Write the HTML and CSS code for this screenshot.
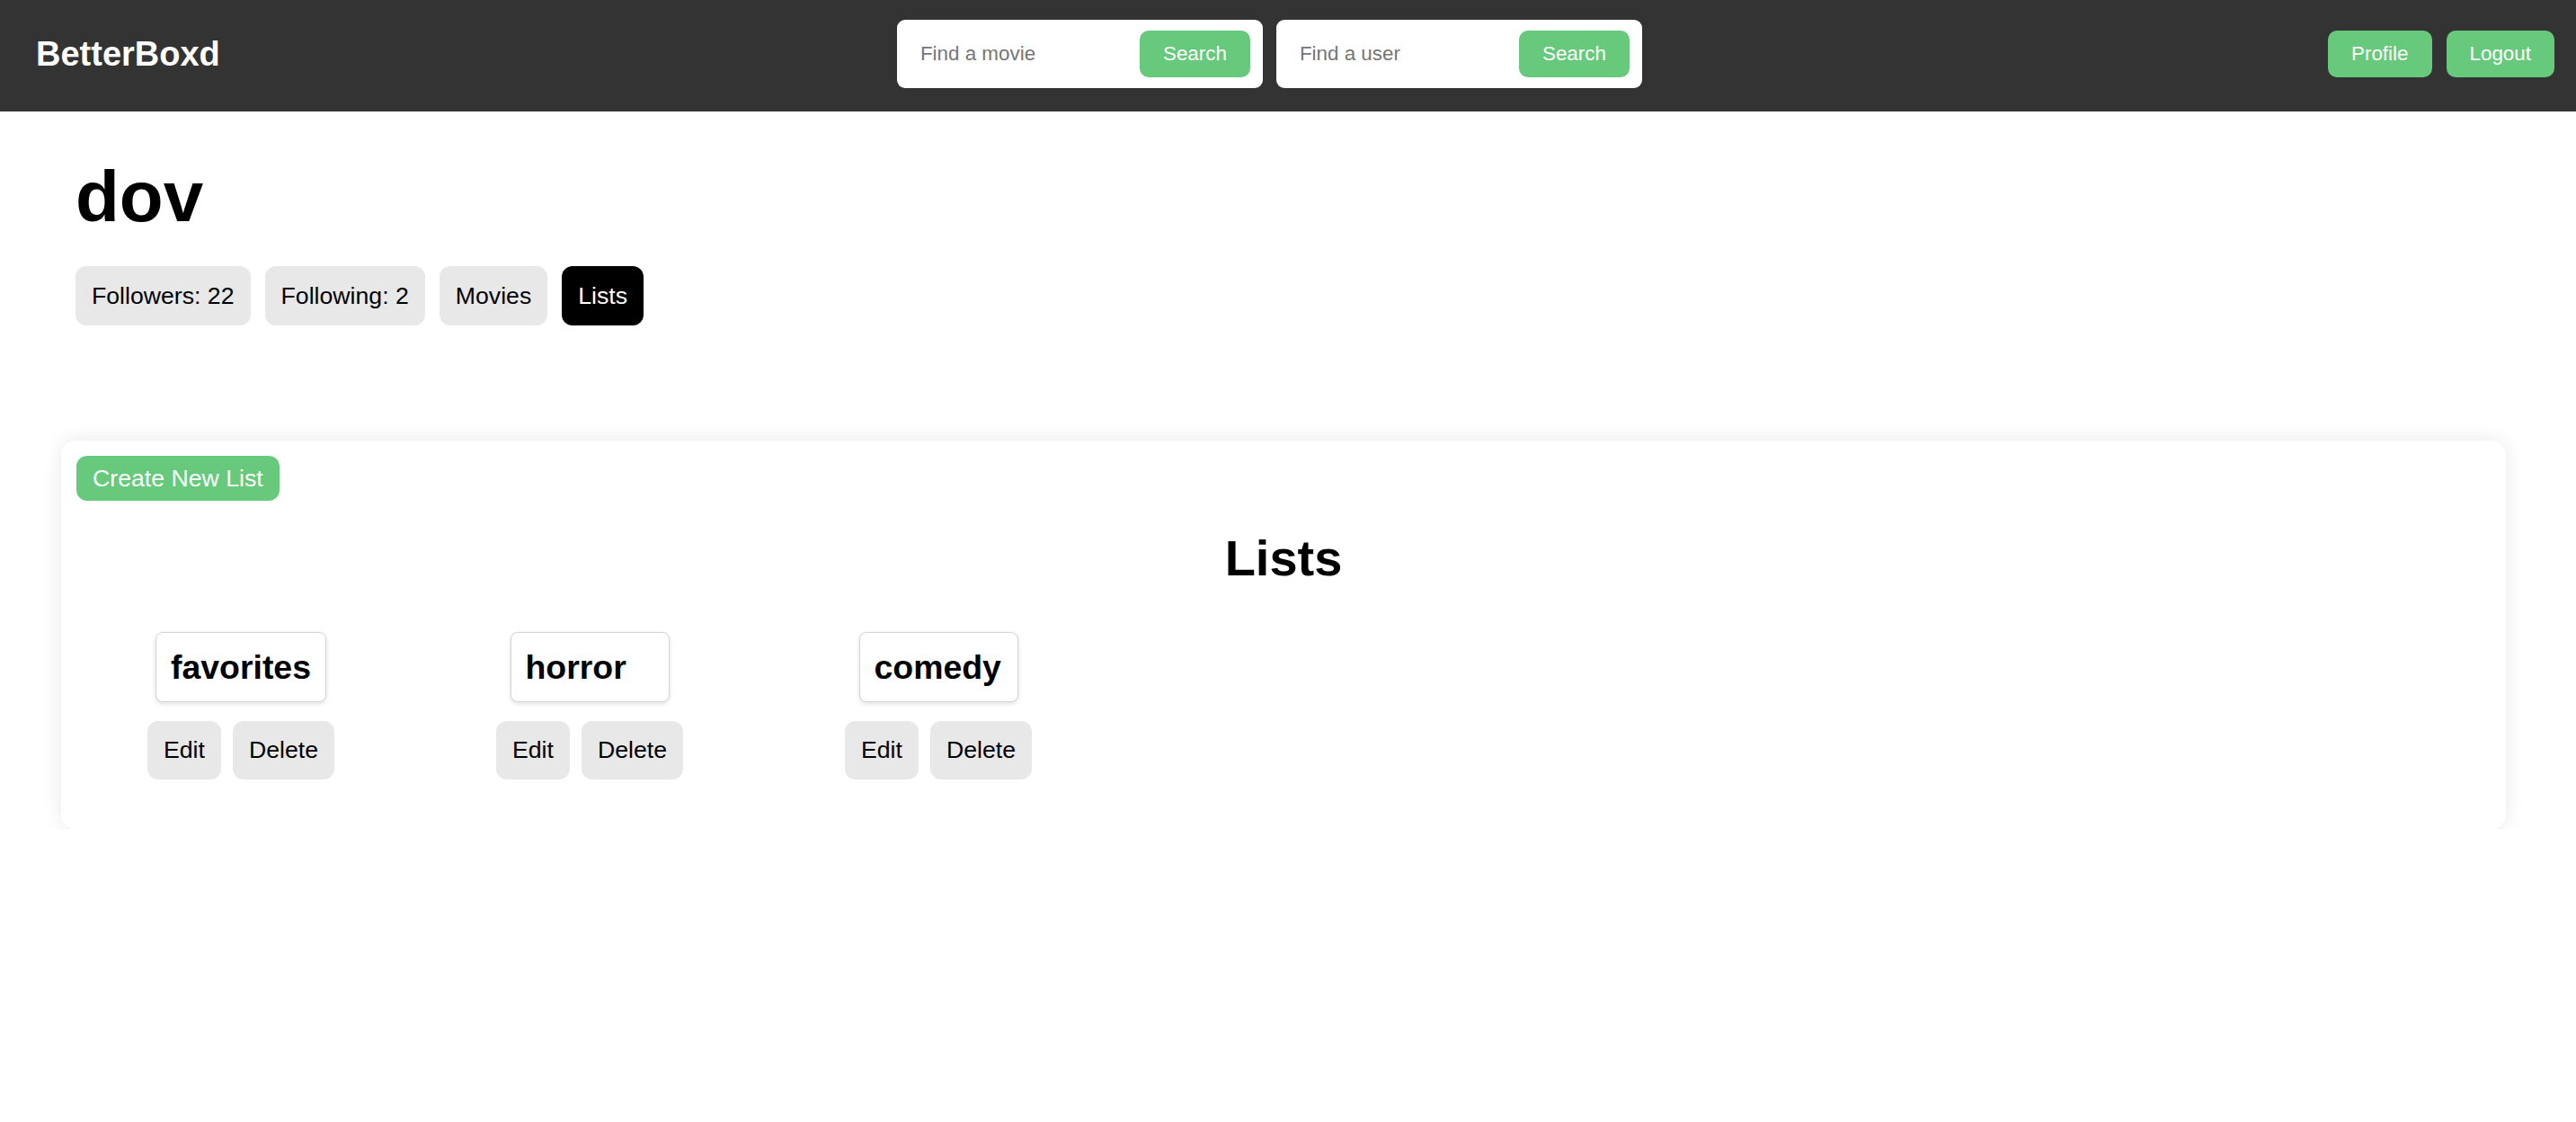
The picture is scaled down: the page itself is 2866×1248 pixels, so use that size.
FILE: index.html
```html
<!DOCTYPE html>
<html lang="en">
<head>
<meta charset="utf-8">
<title>BetterBoxd</title>
<link rel="stylesheet" href="styles.css">
</head>
<body>
<nav class="navbar">
  <h3 class="logo">BetterBoxd</h3>
  <div class="searches">
    <form class="search">
      <input type="text" placeholder="Find a movie">
      <button type="button" class="btn-green">Search</button>
    </form>
    <form class="search">
      <input type="text" placeholder="Find a user">
      <button type="button" class="btn-green">Search</button>
    </form>
  </div>
  <div class="nav-actions">
    <button type="button" class="btn-green">Profile</button>
    <button type="button" class="btn-green">Logout</button>
  </div>
</nav>

<main>
  <section class="profile">
    <h1 class="username">dov</h1>
    <div class="tabs">
      <button type="button" class="pill">Followers: 22</button>
      <button type="button" class="pill">Following: 2</button>
      <button type="button" class="pill">Movies</button>
      <button type="button" class="pill pill-active">Lists</button>
    </div>
  </section>

  <section class="card">
    <button type="button" class="btn-create">Create New List</button>
    <h2 class="card-title">Lists</h2>
    <div class="lists">
      <div class="list-item">
        <h3 class="list-name">favorites</h3>
        <div class="list-actions">
          <button type="button" class="pill">Edit</button>
          <button type="button" class="pill">Delete</button>
        </div>
      </div>
      <div class="list-item">
        <h3 class="list-name">horror</h3>
        <div class="list-actions">
          <button type="button" class="pill">Edit</button>
          <button type="button" class="pill">Delete</button>
        </div>
      </div>
      <div class="list-item">
        <h3 class="list-name">comedy</h3>
        <div class="list-actions">
          <button type="button" class="pill">Edit</button>
          <button type="button" class="pill">Delete</button>
        </div>
      </div>
    </div>
  </section>
</main>
</body>
</html>
```

FILE: styles.css
```css
* {
  box-sizing: border-box;
}

html, body {
  margin: 0;
  padding: 0;
  background: #ffffff;
}

body {
  font-family: "Liberation Sans", Arial, Helvetica, sans-serif;
  color: #000;
}

button, input {
  font-family: "Liberation Sans", Arial, Helvetica, sans-serif;
}

/* ---------- Navbar ---------- */
.navbar {
  height: 124px;
  background: #333333;
  display: flex;
  align-items: center;
  justify-content: space-between;
  padding: 0 24px 4px 40px;
}

.logo {
  margin: 0;
  color: #ffffff;
  font-size: 38px;
  font-weight: bold;
  line-height: 44px;
}

.searches {
  display: flex;
  gap: 15px;
  margin-right: 10px;
}

.search {
  margin: 0;
  width: 407px;
  height: 76px;
  background: #ffffff;
  border-radius: 9px;
  display: flex;
  align-items: center;
  padding: 0 14px 0 26px;
}

.search input {
  flex: 1;
  min-width: 0;
  border: none;
  outline: none;
  background: transparent;
  padding: 0;
  font-size: 22.4px;
  color: #333;
}

.search input::placeholder {
  color: #767676;
}

.btn-green {
  background: #67c97b;
  color: #ffffff;
  border: none;
  border-radius: 10px;
  font-size: 22.4px;
  height: 52px;
  line-height: 52px;
  padding: 0 26px;
}

.nav-actions {
  display: flex;
  gap: 16px;
}

/* ---------- Profile header ---------- */
.profile {
  padding: 49px 0 0 84px;
}

.username {
  margin: 0 0 31px;
  font-size: 80px;
  font-weight: bold;
  line-height: 92px;
}

.tabs {
  display: flex;
  gap: 16px;
}

.pill {
  background: #e8e8e8;
  color: #000;
  border: none;
  border-radius: 12px;
  font-size: 26.67px;
  line-height: 32px;
  padding: 17px 18px;
}

.pill-active {
  background: #000000;
  color: #ffffff;
}

/* ---------- Lists card ---------- */
.card {
  margin: 128px 78px 0 68px;
  padding: 17px 17px 55px;
  border-radius: 16px;
  background: #ffffff;
  box-shadow: 0 0 22px rgba(0, 0, 0, 0.09);
}

.btn-create {
  display: block;
  background: #67c97b;
  color: #ffffff;
  border: none;
  border-radius: 12px;
  font-size: 26.67px;
  line-height: 30px;
  padding: 10px 18px;
}

.card-title {
  margin: 32px 0 50px;
  text-align: center;
  font-size: 56px;
  line-height: 64px;
  font-weight: bold;
}

.lists {
  display: flex;
  gap: 180px;
  padding-left: 79px;
}

.list-item {
  display: flex;
  flex-direction: column;
  align-items: center;
}

.list-name {
  margin: 0;
  min-width: 177px;
  text-align: left;
  font-size: 37.44px;
  font-weight: bold;
  line-height: 42px;
  padding: 17px 16px;
  border: 1px solid #d4d4d4;
  border-radius: 8px;
  background: #ffffff;
  box-shadow: 0 2px 5px rgba(0, 0, 0, 0.12);
}

.list-actions {
  display: flex;
  gap: 13px;
  margin-top: 21px;
}

.list-actions .pill {
  line-height: 31px;
}
```
